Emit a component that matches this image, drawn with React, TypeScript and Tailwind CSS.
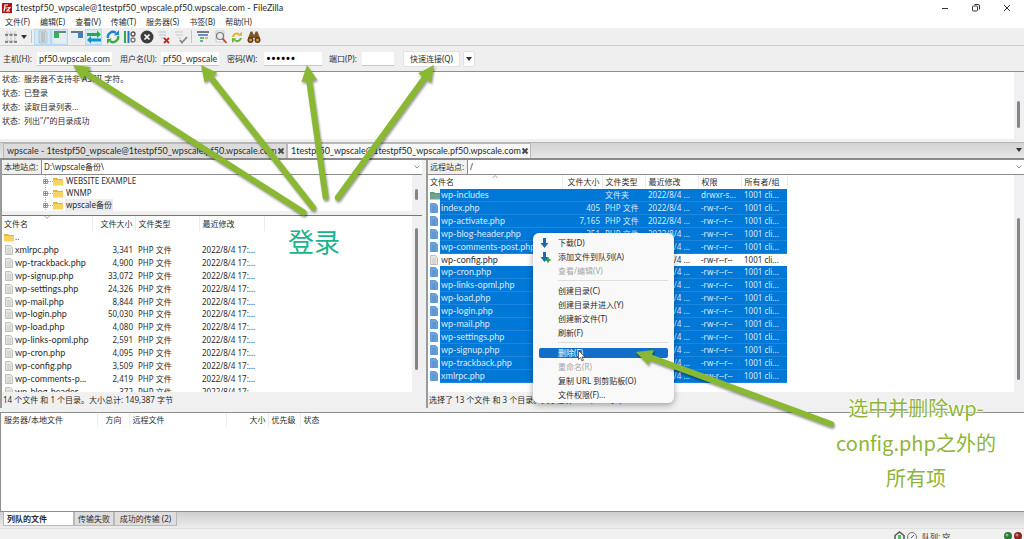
import { useState } from 'react';
import type { ReactNode } from 'react';
import clsx from 'clsx';

const menus = ['文件(F)', '编辑(E)', '查看(V)', '传输(T)', '服务器(S)', '书签(B)', '帮助(H)'];

const logLines = ['服务器不支持非 ASCII 字符。', '已登录', '读取目录列表...', '列出"/"的目录成功'];

const treeItems = ['WEBSITE EXAMPLE', 'WNMP', 'wpscale备份'];

const localFiles = [
  ['xmlrpc.php', '3,341'],
  ['wp-trackback.php', '4,900'],
  ['wp-signup.php', '33,072'],
  ['wp-settings.php', '24,326'],
  ['wp-mail.php', '8,844'],
  ['wp-login.php', '50,030'],
  ['wp-load.php', '4,080'],
  ['wp-links-opml.php', '2,591'],
  ['wp-cron.php', '4,095'],
  ['wp-config.php', '3,509'],
  ['wp-comments-p...', '2,419'],
  ['wp-blog-header....', '372'],
];

interface RemoteFile {
  name: string;
  size?: string;
  folder?: boolean;
}

const remoteFiles: RemoteFile[] = [
  { name: 'wp-includes', folder: true },
  { name: 'index.php', size: '405' },
  { name: 'wp-activate.php', size: '7,165' },
  { name: 'wp-blog-header.php', size: '351' },
  { name: 'wp-comments-post.php', size: '2,338' },
  { name: 'wp-config.php', size: '3,509' },
  { name: 'wp-cron.php', size: '3,943' },
  { name: 'wp-links-opml.php', size: '2,494' },
  { name: 'wp-load.php', size: '3,973' },
  { name: 'wp-login.php', size: '48,498' },
  { name: 'wp-mail.php', size: '8,522' },
  { name: 'wp-settings.php', size: '23,706' },
  { name: 'wp-signup.php', size: '32,051' },
  { name: 'wp-trackback.php', size: '4,748' },
  { name: 'xmlrpc.php', size: '3,236' },
];

const contextMenu: { label?: string; icon?: 'download' | 'queue'; disabled?: boolean; active?: boolean }[] = [
  { label: '下载(D)', icon: 'download' },
  { label: '添加文件到队列(A)', icon: 'queue' },
  { label: '查看/编辑(V)', disabled: true },
  {},
  { label: '创建目录(C)' },
  { label: '创建目录并进入(Y)' },
  { label: '创建新文件(T)' },
  { label: '刷新(F)' },
  {},
  { label: '删除(E)', active: true },
  { label: '重命名(R)', disabled: true },
  { label: '复制 URL 到剪贴板(O)' },
  { label: '文件权限(F)...' },
];

// [tip x, tip y, tail x, tail y]
const arrows = [
  [73, 65, 306, 214],
  [201, 65, 315, 210],
  [307, 65, 326, 200],
  [434, 65, 336, 200],
  [636, 352, 834, 425],
];

function FolderIcon({ green }: { green?: boolean }) {
  return (
    <svg viewBox="0 0 10 9" className="h-[9px] w-[10px] shrink-0" aria-hidden="true">
      <path d="M0 1h4l1 1h5v6H0z" fill={green ? '#5d9a80' : '#e9b53c'} />
      <path d="M0 3h10v5.5H0z" fill={green ? '#6fa58c' : '#fbd365'} />
    </svg>
  );
}

function FileIcon({ selected }: { selected?: boolean }) {
  return (
    <svg viewBox="0 0 8 10" className="h-[10px] w-2 shrink-0" aria-hidden="true">
      <path
        d="M.5.5h5l2 2v7h-7z"
        fill={selected ? '#6da4dc' : '#e6e6e2'}
        stroke={selected ? '#5f9ad6' : '#c0c0bb'}
      />
      <path d="M2 4h4M2 6h4M2 8h4" stroke={selected ? '#4682c4' : '#b9b9b9'} strokeWidth=".7" />
    </svg>
  );
}

function Chevron() {
  return (
    <svg viewBox="0 0 6 4" className="h-1 w-[6px] shrink-0" aria-hidden="true">
      <path d="M.5.5 3 3 5.500.5" fill="none" stroke="#777" strokeWidth=".8" />
    </svg>
  );
}

function Caret() {
  return (
    <svg viewBox="0 0 6 4" className="h-1 w-[6px] shrink-0" aria-hidden="true">
      <path d="M0 0h6L3 4z" fill="#333" />
    </svg>
  );
}

function TabClose() {
  return (
    <svg viewBox="0 0 8 8" className="h-2 w-2 shrink-0" aria-hidden="true">
      <path d="m1.500 1.500 5 5m0-5-5 5" stroke="#4a4a4a" strokeWidth="2" />
    </svg>
  );
}

interface ToolButtonProps {
  label: string;
  active?: boolean;
  children: ReactNode;
}

function ToolButton({ label, active, children }: ToolButtonProps) {
  return (
    <button
      type="button"
      aria-label={label}
      className={clsx(
        'flex h-4 w-[17px] items-center justify-center border',
        active ? 'border-[#b4daf5] bg-[#d3e9f8]' : 'border-transparent'
      )}
    >
      <svg viewBox="0 0 14 14" className="h-[14px] w-[14px] shrink-0" fill="none" aria-hidden="true">
        {children}
      </svg>
    </button>
  );
}

function Toolbar() {
  return (
    <div className="flex h-[18px] items-center border-b border-[#cfcfcf] bg-[#efefef] pl-[2px]">
      <ToolButton label="站点管理器">
        <path d="M1 4h12M1 11h12M3 1v12M7 1v12M11 1v12" stroke="#bbb" strokeWidth=".8" />
        <path d="M1 4h3v2H1zM5.500 4h3v2h-3zM10 4h3v2h-3zM1 11h3v2H1zM5.500 11h3v2h-3zM10 11h3v2h-3z" fill="#888" />
      </ToolButton>
      <button type="button" aria-label="站点列表" className="flex h-4 w-[10px] items-center justify-center">
        <Caret />
      </button>
      <span className="mx-[2px] h-[13px] w-px bg-[#c4c4c4]" />
      <ToolButton label="消息日志" active>
        <path d="M3 1h7l1 2v10H3z" fill="#cfdbe0" stroke="#a5b6bb" strokeWidth=".6" />
        <path d="M5 3h4M5 5h4M5 7h4M5 9h4M5 11h4" stroke="#8a9ca3" strokeWidth=".7" />
      </ToolButton>
      <ToolButton label="本地目录树" active>
        <path d="M1 1h12v12H1z" fill="#e4eef2" />
        <path d="M1 1h12v2H1z" fill="#5b8f77" />
        <path d="M1 3h5v5H1z" fill="#2fb457" />
      </ToolButton>
      <ToolButton label="远程目录树">
        <path d="M1 1h12v12H1z" fill="#e8ecef" />
        <path d="M1 1h12v2H1z" fill="#64798d" />
        <path d="M8 3h5v5H8z" fill="#3f7fc4" />
      </ToolButton>
      <ToolButton label="传输队列" active>
        <path d="M0 3h10V.500L14 4.500 10 8V6H0z" fill="#2aaa3f" />
        <path d="M14 8.500H4V6L0 10l4 3.500V11.500h10z" fill="#1593c9" />
      </ToolButton>
      <span className="w-[2px]" />
      <ToolButton label="刷新">
        <path d="M2 8a5 5 0 0 1 8-5" stroke="#1d82cf" strokeWidth="2.400" />
        <path d="M8 5.500 13 5V0z" fill="#1d82cf" />
        <path d="M12 6a5 5 0 0 1-8 5" stroke="#35ad43" strokeWidth="2.400" />
        <path d="M6 8.500 1 9v5z" fill="#35ad43" />
      </ToolButton>
      <ToolButton label="处理队列">
        <path d="M2 1v12" stroke="#2fab49" strokeWidth="2" />
        <path d="M5.500 1v12" stroke="#2477c1" strokeWidth="2" />
        <circle cx="10" cy="4" r="2" stroke="#555" strokeWidth="1.300" />
        <circle cx="10" cy="10" r="2" stroke="#777" strokeWidth="1.300" />
      </ToolButton>
      <ToolButton label="取消">
        <circle cx="7" cy="7" r="6.500" fill="#3c3c3c" />
        <path d="m4.500 4.500 5 5m0-5-5 5" stroke="#fff" strokeWidth="1.700" />
      </ToolButton>
      <ToolButton label="断开连接">
        <path d="M1 2h8M2 5h7M4 8h3" stroke="#b3c2d1" strokeWidth="1.200" />
        <path d="m7 8 5 5m0-5-5 5" stroke="#c8262c" strokeWidth="1.800" />
      </ToolButton>
      <ToolButton label="重新连接">
        <path d="M1 2h8M2 5h7M4 8h3" stroke="#ccc" strokeWidth="1.200" />
        <path d="m6 10 2 2.500L13 7" stroke="#888" strokeWidth="1.800" />
      </ToolButton>
      <span className="mx-[2px] h-[13px] w-px bg-[#c4c4c4]" />
      <ToolButton label="过滤器">
        <path d="M1 2h12" stroke="#555" strokeWidth="1.500" />
        <path d="M2 5h10" stroke="#3b79be" strokeWidth="1.600" />
        <path d="M4 8h4M4 11h3" stroke="#4f9a58" strokeWidth="1.500" />
        <path d="M9 8h3" stroke="#999" strokeWidth="1.300" />
      </ToolButton>
      <ToolButton label="目录对比">
        <path d="M3 1h8v11H3z" fill="#f7f7f7" stroke="#bbb" strokeWidth=".7" />
        <circle cx="7" cy="6" r="3.500" fill="#e6eef5" stroke="#777" strokeWidth="1.200" />
        <path d="m9.500 8.500 4 4.500" stroke="#cf3b31" strokeWidth="1.700" />
      </ToolButton>
      <ToolButton label="同步浏览">
        <path d="M3 7a4 4 0 0 1 6-3" stroke="#e4b52c" strokeWidth="2" />
        <path d="M7.500 5.500 12 6V1.500z" fill="#e4b52c" />
        <path d="M11 8a4 4 0 0 1-6 2.500" stroke="#6db53e" strokeWidth="2" />
        <path d="M6.500 8.500 2 8v5z" fill="#6db53e" />
      </ToolButton>
      <ToolButton label="搜索文件">
        <path d="M3.500 1.500h2l1 3h1l1-3h2L13 8H1z" fill="#7d5526" />
        <circle cx="3.500" cy="10" r="3" fill="#5a3c18" />
        <circle cx="10.500" cy="10" r="3" fill="#5a3c18" />
        <circle cx="3.500" cy="10" r="1.500" fill="#d99a2d" />
        <circle cx="10.500" cy="10" r="1.500" fill="#d99a2d" />
      </ToolButton>
    </div>
  );
}

function QuickConnect() {
  const [host, setHost] = useState('pf50.wpscale.com');
  const [user, setUser] = useState('pf50_wpscale');
  const [password, setPassword] = useState('secret');
  const [port, setPort] = useState('');
  const field = 'h-[14px] bg-white px-[2px] font-[Lato,sans-serif] text-[9px] leading-3 outline-none border-b border-[#c8c8c8]';

  return (
    <form className="flex h-[25px] items-center bg-[#efefef] pl-[3px]">
      <label htmlFor="host" className="w-[34px]">主机(H):</label>
      <input id="host" value={host} onChange={(e) => setHost(e.target.value)} className={clsx(field, 'w-[75px]')} />
      <label htmlFor="user" className="ml-2 w-[41px]">用户名(U):</label>
      <input id="user" value={user} onChange={(e) => setUser(e.target.value)} className={clsx(field, 'w-[58px]')} />
      <label htmlFor="password" className="ml-2 w-[37px]">密码(W):</label>
      <input
        id="password"
        type="password"
        value={password}
        onChange={(e) => setPassword(e.target.value)}
        className="h-[14px] w-[58px] border-b border-[#c8c8c8] bg-white px-[2px] font-['Noto_Sans',sans-serif] text-[13px] leading-3 text-black outline-none"
      />
      <label htmlFor="port" className="ml-[7px] w-[33px]">端口(P):</label>
      <input id="port" value={port} onChange={(e) => setPort(e.target.value)} className={clsx(field, 'w-8')} />
      <button type="button" className="ml-[9px] h-4 w-[57px] rounded-xs border border-[#e2e2e2] bg-[#fdfdfd]">
        快速连接(Q)
      </button>
      <button
        type="button"
        aria-label="快速连接历史"
        className="ml-[3px] flex h-4 w-3 items-center justify-center rounded-xs border border-[#e2e2e2] bg-[#fdfdfd]"
      >
        <Caret />
      </button>
    </form>
  );
}

interface SiteBarProps {
  id: string;
  label: string;
  path: string;
}

function SiteBar({ id, label, path }: SiteBarProps) {
  return (
    <div className="flex h-[15px] items-center border-b border-[#8c8c8c] bg-[#f0f0f0]">
      <label htmlFor={id} className="w-[39px] shrink-0 pl-[2px]">{label}</label>
      <div className="flex h-full flex-1 items-center border-l border-[#8c8c8c] bg-white pr-[2px]">
        <select id={id} className="h-full flex-1 appearance-none pl-[2px] outline-none">
          <option>{path}</option>
        </select>
        <Chevron />
      </div>
    </div>
  );
}

function Scrollbar({ className }: { className: string }) {
  return (
    <div className="w-[10px] shrink-0 bg-[#f0f0f2] px-[3px]">
      <div className={clsx('w-[3px] rounded-xs bg-[#858585]', className)} />
    </div>
  );
}

function LocalPane() {
  return (
    <section className="flex min-w-0 flex-col border-l-2 border-[#9a9a9a]">
      <SiteBar id="local-site" label="本地站点:" path="D:\wpscale备份\" />
      <div className="flex h-9 bg-white">
        <ul className="min-w-0 flex-1 pl-[41px]">
          {treeItems.map((item, i) => (
            <li key={item} className="flex h-3 items-center">
              <svg viewBox="0 0 10 12" className="h-3 w-[10px] shrink-0" aria-hidden="true">
                <path d="M2.500 0v12M5 6.500h5" stroke="#aaa" strokeDasharray="1 1" />
                <path d="M.5 4.500h4v4h-4z" fill="#fff" stroke="#999" />
                <path d="M1 6.500h3M2.500 5v3" stroke="#555" strokeWidth=".7" />
              </svg>
              <FolderIcon />
              <span className={clsx('ml-[2px] px-px', i === 2 && 'bg-[#ececec]')}>{item}</span>
            </li>
          ))}
        </ul>
        <Scrollbar className="mt-[14px] h-[11px]" />
      </div>
      <div className="h-1 bg-[#f0f0f0]" />
      <div className="flex h-[177px] overflow-hidden border-t border-[#777] bg-white">
        <div className="min-w-0 flex-1">
          <table className="h-[182px] w-[262px] table-fixed border-collapse text-left">
            <colgroup>
              <col className="w-[90px]" />
              <col className="w-[43px]" />
              <col className="w-[64px]" />
              <col className="w-[65px]" />
            </colgroup>
            <thead>
              <tr className="h-[15px]">
                <th className="relative border-r border-[#ececec] pl-[2px] font-normal">
                  文件名
                  <svg viewBox="0 0 6 3" className="absolute top-0 left-[42px] h-[3px] w-[6px]" aria-hidden="true">
                    <path d="m.5 0L3 2.500 5.500 0" fill="none" stroke="#888" strokeWidth=".8" />
                  </svg>
                </th>
                <th className="border-r border-[#ececec] pr-[2px] text-right font-normal whitespace-nowrap">文件大小</th>
                <th className="border-r border-[#ececec] pl-[3px] font-normal">文件类型</th>
                <th className="border-r border-[#ececec] pl-[3px] font-normal">最近修改</th>
              </tr>
            </thead>
            <tbody>
              <tr>
                <td colSpan={4} className="pl-[2px]">
                  <span className="flex items-center gap-px"><FolderIcon />..</span>
                </td>
              </tr>
              {localFiles.map(([name, size]) => (
                <tr key={name}>
                  <td className="pl-[3px]">
                    <span className="flex items-center gap-[2px] font-[Lato,sans-serif] text-[9px] leading-3 whitespace-nowrap">
                      <FileIcon />
                      {name}
                    </span>
                  </td>
                  <td className="pr-[2px] text-right">{size}</td>
                  <td className="pl-[3px]">PHP 文件</td>
                  <td className="pl-[3px] whitespace-nowrap">2022/8/4 17:...</td>
                </tr>
              ))}
            </tbody>
          </table>
        </div>
        <Scrollbar className="mt-3 h-[142px]" />
      </div>
      <p className="flex h-4 items-center bg-[#f0f0f0] pl-px">14 个文件 和 1 个目录。大小总计: 149,387 字节</p>
    </section>
  );
}

function RemotePane() {
  return (
    <section className="flex min-w-0 flex-col border-l-2 border-[#9a9a9a]">
      <SiteBar id="remote-site" label="远程站点:" path="/" />
      <div className="flex h-[217px] overflow-hidden bg-white">
        <div className="min-w-0 flex-1">
          <table className="h-[207px] w-[359px] table-fixed border-collapse text-left">
            <colgroup>
              <col className="w-[12px]" />
              <col className="w-[122px]" />
              <col className="w-[40px]" />
              <col className="w-[43px]" />
              <col className="w-[53px]" />
              <col className="w-[43px]" />
              <col className="w-[46px]" />
            </colgroup>
            <thead>
              <tr className="h-[14px]">
                <th colSpan={2} className="relative border-r border-[#ececec] pl-[2px] font-normal">
                  文件名
                  <svg viewBox="0 0 6 3" className="absolute top-0 left-[64px] h-[3px] w-[6px]" aria-hidden="true">
                    <path d="m.5 3L3 .5 5.500 3" fill="none" stroke="#888" strokeWidth=".8" />
                  </svg>
                </th>
                <th className="border-r border-[#ececec] pr-[2px] text-right font-normal whitespace-nowrap">文件大小</th>
                <th className="border-r border-[#ececec] pl-[3px] font-normal">文件类型</th>
                <th className="border-r border-[#ececec] pl-[3px] font-normal">最近修改</th>
                <th className="border-r border-[#ececec] pl-[3px] font-normal">权限</th>
                <th className="border-r border-[#ececec] pl-[3px] font-normal whitespace-nowrap">所有者/组</th>
              </tr>
            </thead>
            <tbody>
              {remoteFiles.map(({ name, size, folder }) => {
                const selected = name !== 'wp-config.php';
                const cell = selected ? 'bg-[#0078d7] border-b border-[#1c87dd] text-[#dcebfa]' : 'bg-white';
                return (
                  <tr key={name}>
                    <td className="pl-[2px]">
                      {folder ? <FolderIcon green /> : <FileIcon selected={selected} />}
                    </td>
                    <td className={clsx(cell, 'pl-px font-[Lato,sans-serif] text-[9px] whitespace-nowrap')}>{name}</td>
                    <td className={clsx(cell, 'pr-[2px] text-right')}>{size}</td>
                    <td className={clsx(cell, 'pl-[3px] whitespace-nowrap')}>{folder ? '文件夹' : 'PHP 文件'}</td>
                    <td className={clsx(cell, 'pl-[3px] whitespace-nowrap')}>2022/8/4 ...</td>
                    <td className={clsx(cell, 'pl-[3px] whitespace-nowrap')}>{folder ? 'drwxr-s...' : '-rw-r--r--'}</td>
                    <td className={clsx(cell, 'pl-[3px] whitespace-nowrap')}>1001 cli...</td>
                  </tr>
                );
              })}
            </tbody>
          </table>
        </div>
        <Scrollbar className="mt-[43px] h-[162px]" />
      </div>
      <p className="flex h-4 items-center bg-[#f0f0f0] pl-px">选择了 13 个文件 和 3 个目录。大小总计: 147,130 字节</p>
    </section>
  );
}

function ContextMenu() {
  return (
    <div role="menu" className="absolute top-[233px] left-[533px] w-[141px] rounded-md bg-[#f9f9f9] px-[6px] pt-[3px] pb-px shadow-[0_2px_6px_rgba(0,0,0,0.35)]">
      {contextMenu.map(({ label, icon, disabled, active }, i) =>
        label ? (
          <button
            key={label}
            type="button"
            role="menuitem"
            disabled={disabled}
            className={clsx(
              'flex h-[14px] w-full items-center text-left whitespace-nowrap',
              disabled && 'text-[#a8a8a8]'
            )}
          >
            <span
              className={clsx(
                'flex h-[10px] w-full items-center rounded-xs leading-[10px]',
                active && 'bg-[#0f6fc9] text-white'
              )}
            >
              <span className="flex w-[19px] shrink-0 items-center">
                {icon && (
                  <svg viewBox="0 0 12 12" className="h-3 w-3" aria-hidden="true">
                    <path d="M4 1h3v5h2.500l-4 5-4-5H4z" fill="#2166b3" />
                    {icon === 'queue' && <path d="M6.500 9h5M9 6.500v5" stroke="#31a744" strokeWidth="2" />}
                  </svg>
                )}
              </span>
              {label}
            </span>
          </button>
        ) : (
          <hr key={i} className="my-[2px] mb-[3px] ml-[19px] border-[#dedede]" />
        )
      )}
    </div>
  );
}

function Arrows() {
  return (
    <svg
      viewBox="0 0 1024 539"
      className="pointer-events-none absolute top-0 left-0 h-[539px] w-[1024px] drop-shadow-[1px_2px_1px_rgba(0,0,0,0.4)]"
      aria-hidden="true"
    >
      {arrows.map(([x, y, tx, ty]) => {
        const length = Math.hypot(tx - x, ty - y);
        const angle = (Math.atan2(ty - y, tx - x) * 180) / Math.PI;
        return (
          <g key={x} transform={`translate(${x} ${y}) rotate(${angle})`} fill="#8ab833">
            <path d="M0 0 16-8v16z" />
            <path d={`M14 0H${length - 3}`} stroke="#8ab833" strokeWidth="6" strokeLinecap="round" />
          </g>
        );
      })}
    </svg>
  );
}

export default function App() {
  return (
    <div className="relative flex h-screen flex-col overflow-hidden bg-[#f0f0f0] font-['Noto_Sans','Noto_Sans_CJK_SC',sans-serif] text-[8px] leading-3 text-[#2c2c2c]">
      <header className="flex h-4 items-center bg-white pr-[13px] pl-[2px]">
        <svg viewBox="0 0 10 10" className="mr-[3px] h-[10px] w-[10px]" aria-hidden="true">
          <path d="M0 0h10v10H0z" fill="#b40f12" />
          <path d="M2 8.500 3 2h3M2.500 5H5M5.500 4.500H8L5 8h3" fill="none" stroke="#fff" strokeWidth="1.200" />
        </svg>
        <h1 className="flex-1 font-[Lato,sans-serif] text-[9px]">
          1testpf50_wpscale@1testpf50_wpscale.pf50.wpscale.com - FileZilla
        </h1>
        <div className="flex gap-[23px] text-[#333]">
          <button type="button" aria-label="最小化">
            <svg viewBox="0 0 8 8" className="h-2 w-2"><path d="M1 4.500h6" stroke="currentColor" /></svg>
          </button>
          <button type="button" aria-label="还原">
            <svg viewBox="0 0 8 8" className="h-2 w-2" fill="none" stroke="currentColor">
              <rect x=".5" y="2" width="5" height="5" rx="1" />
              <path d="M2.500.5H6a1.500 1.500 0 0 1 1.500 1.500v3.500" />
            </svg>
          </button>
          <button type="button" aria-label="关闭">
            <svg viewBox="0 0 8 8" className="h-2 w-2"><path d="m1 1 6 6m0-6L1 7" stroke="currentColor" /></svg>
          </button>
        </div>
      </header>

      <nav className="flex h-3 items-center gap-[10px] bg-white pl-[5px]">
        {menus.map((menu) => (
          <button key={menu} type="button">{menu}</button>
        ))}
      </nav>

      <Toolbar />
      <QuickConnect />

      <div className="flex h-[68px] border-t border-[#8e8e8e] bg-white">
        <ul className="flex-1 pl-[2px]">
          {logLines.map((line) => (
            <li key={line} className="flex h-[14px] items-center">
              <span className="w-[22px]">状态:</span>
              {line}
            </li>
          ))}
        </ul>
        <Scrollbar className="mt-[29px] h-[27px]" />
      </div>

      <div className="mt-[3px] flex h-[18px] items-end border-t border-b-2 border-[#8a8a8a] border-t-[#b5b5b5] bg-linear-to-b from-[#d2d2d2] to-[#e6e6e6] pl-[3px] font-[Lato,sans-serif] text-[9px] whitespace-nowrap">
        <button type="button" className="flex h-[15px] w-[284px] items-center justify-between border border-b-0 border-[#b9b9b9] bg-[#dcdcdc] pr-[3px] pl-[3px]">
          wpscale - 1testpf50_wpscale@1testpf50_wpscale.pf50.wpscale.com
          <TabClose />
        </button>
        <button type="button" className="flex h-[15px] w-[244px] items-center justify-between border border-b-0 border-[#b9b9b9] bg-[#f7f7f7] pr-[2px] pl-[3px]">
          1testpf50_wpscale@1testpf50_wpscale.pf50.wpscale.com
          <TabClose />
        </button>
        <span className="mb-[6px] ml-auto pr-[2px]"><Caret /></span>
      </div>

      <main className="grid grid-cols-[422fr_598fr] gap-1">
        <LocalPane />
        <RemotePane />
      </main>

      <section className="mt-1 flex-1 border-y border-l border-[#8e8e8e] bg-white">
        <table className="w-[420px] table-fixed text-left">
          <colgroup>
            <col className="w-[96px]" />
            <col className="w-[32px]" />
            <col className="w-[97px]" />
            <col className="w-[42px]" />
            <col className="w-[32px]" />
            <col />
          </colgroup>
          <thead>
            <tr className="h-[14px]">
              <th className="border-r border-[#ececec] pl-[3px] font-normal">服务器/本地文件</th>
              <th className="border-r border-[#ececec] pl-2 font-normal">方向</th>
              <th className="border-r border-[#ececec] pl-[3px] font-normal">远程文件</th>
              <th className="border-r border-[#ececec] pr-[2px] text-right font-normal">大小</th>
              <th className="border-r border-[#ececec] pl-[3px] font-normal">优先级</th>
              <th className="pl-[3px] font-normal">状态</th>
            </tr>
          </thead>
        </table>
      </section>

      <div className="flex h-4 bg-linear-to-b from-[#cfcfcf] to-[#ededed] pl-[3px]">
        <button type="button" className="h-[14px] w-[71px] border border-t-0 border-[#b9b9b9] bg-white pl-[3px] text-left font-bold">列队的文件</button>
        <button type="button" className="h-[14px] w-10 border border-t-0 border-[#b9b9b9] bg-[#dedede]">传输失败</button>
        <button type="button" className="h-[14px] w-[63px] border border-t-0 border-[#b9b9b9] bg-[#dedede]">成功的传输 (2)</button>
      </div>

      <footer className="flex h-[11px] shrink-0 items-start justify-end border-t border-[#e0e0e0] pt-[2px] pr-px">
        <svg viewBox="0 0 24 10" className="h-[10px] w-6 shrink-0" fill="none" aria-hidden="true">
          <path d="M1 4.500 5.500 1 10 4.500V10H1z" stroke="#555" strokeWidth="1.500" />
          <path d="M4 4h3v6H4z" fill="#4fc25b" />
          <circle cx="18" cy="6" r="4.500" stroke="#777" />
          <path d="m17 7 3-3" stroke="#555" />
        </svg>
        <span className="ml-1 w-[81px] shrink-0">队列: 空</span>
        <svg viewBox="0 0 20 10" className="h-[10px] w-5 shrink-0" aria-hidden="true">
          <circle cx="5" cy="5" r="4" fill="#2b7a35" />
          <circle cx="15" cy="5" r="4" fill="#8f2424" />
          <circle cx="4" cy="4" r="1.500" fill="#7fbd86" />
          <circle cx="14" cy="4" r="1.500" fill="#d18080" />
        </svg>
      </footer>

      <ContextMenu />
      <svg viewBox="0 0 8 12" className="absolute top-[350px] left-[578px] h-3 w-2" aria-hidden="true">
        <path d="M.5.5v9l2-2 1.500 3.500 1.500-.7L4 7h3z" fill="#fff" stroke="#333" strokeWidth=".7" />
      </svg>
      <Arrows />
      <p className="absolute top-[223px] left-[288px] font-['Noto_Sans_CJK_SC',sans-serif] text-[26px] leading-9 text-[#1bb38c]">登录</p>
      <p className="absolute top-[390px] left-[836px] w-[160px] text-center font-['Noto_Sans_CJK_SC',sans-serif] text-[20px] leading-[35px] text-[#8fb536] [text-shadow:0_0_2px_#fff,0_0_2px_#fff,0_0_3px_#fff]">
        选中并删除wp-<br />config.php之外的<br />所有项
      </p>
    </div>
  );
}
